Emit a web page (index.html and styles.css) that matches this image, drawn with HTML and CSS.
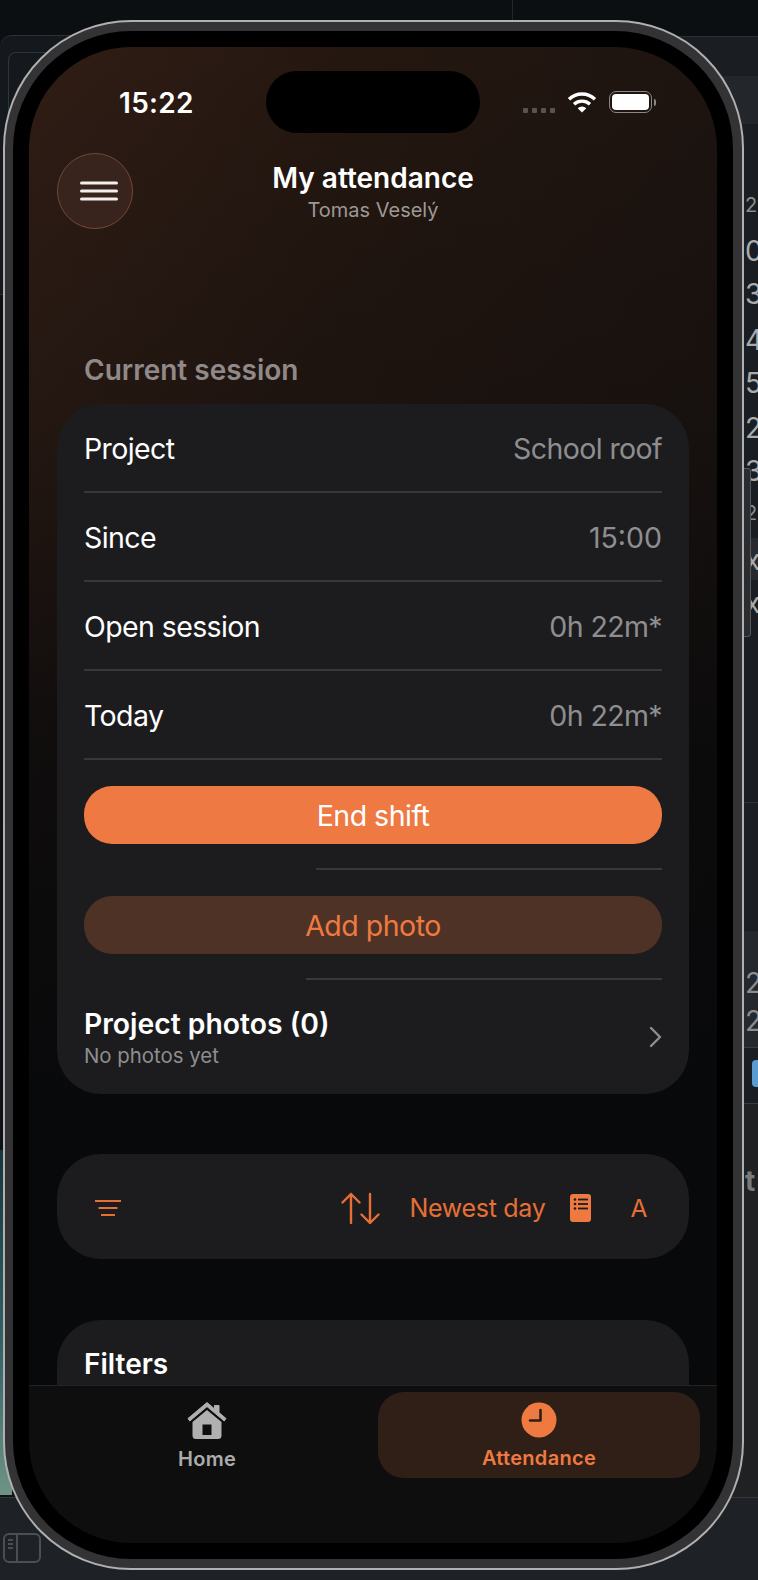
FILE: index.html
```html
<!DOCTYPE html>
<html lang="en">
<head>
<meta charset="utf-8">
<title>My attendance</title>
<link rel="stylesheet" href="styles.css">
</head>
<body>
<div class="backdrop">
  <div class="bd-vline"></div>
  <div class="bd-win-left"></div>
  <div class="bd-win-left-inner"></div>
  <div class="bd-panel-right"></div>
  <div class="bd-band bd-band-a"></div>
  <div class="bd-band bd-band-e"></div>
  <div class="bd-band bd-band-b"></div>
  <div class="bd-band bd-band-c"></div>
  <div class="bd-band bd-band-d"></div>
  <div class="bd-blue"></div>
  <div class="bd-foot"></div>
  <div class="bd-teal"></div>
  <span class="bd-ch bd-c1">0</span>
  <span class="bd-ch bd-c2">3</span>
  <span class="bd-ch bd-c3">4</span>
  <span class="bd-ch bd-c4">5</span>
  <span class="bd-ch bd-c5">2</span>
  <span class="bd-ch bd-c6">3</span>
  <span class="bd-ch bd-c10">2</span>
  <span class="bd-ch bd-c11">x</span>
  <span class="bd-ch bd-c12">x</span>
  <span class="bd-ch bd-c13">2</span>
  <span class="bd-ch bd-c7">2</span>
  <span class="bd-ch bd-c8">2</span>
  <span class="bd-ch bd-c9">t</span>
  <div class="bd-tab"></div>
  <svg class="bd-sidebar" viewBox="0 0 38 30" fill="none" stroke="#4a4f57" stroke-width="2"><rect x="1" y="1" width="36" height="28" rx="5"/><path d="M14 1v28"/><path d="M5 7h5M5 11h5M5 15h5"/></svg>
</div>

<div class="device">
  <div class="bezel">
    <main class="screen">
      <div class="island"></div>

      <div class="status">
        <span class="time">15:22</span>
        <div class="status-icons">
          <div class="signal"><i></i><i></i><i></i><i></i></div>
          <svg class="wifi" viewBox="0 0 30 22" fill="none" stroke="#fff" stroke-width="3.4" stroke-linecap="butt"><path d="M2 8.2a19 19 0 0 1 26 0"/><path d="M7 13.2a12 12 0 0 1 16 0"/><path d="M15 21.6l-4.3-4.4a6 6 0 0 1 8.6 0z" fill="#fff" stroke="none"/></svg>
          <div class="battery"><div class="battery-body"><div class="battery-fill"></div></div><div class="battery-nub"></div></div>
        </div>
      </div>

      <header class="header">
        <button class="menu-btn" aria-label="Menu">
          <svg viewBox="0 0 38 20" width="38" height="20" stroke="#f2eeec" stroke-width="3" stroke-linecap="round"><path d="M1.5 2h35M1.5 10h35M1.5 18h35"/></svg>
        </button>
        <div class="title-block">
          <div class="title">My attendance</div>
          <div class="subtitle">Tomas Veselý</div>
        </div>
      </header>

      <div class="content">
        <h2 class="section-label">Current session</h2>

        <section class="card session">
          <div class="row"><span>Project</span><span class="value">School roof</span></div>
          <div class="row"><span>Since</span><span class="value value-time">15:00</span></div>
          <div class="row"><span>Open session</span><span class="value">0h 22m*</span></div>
          <div class="row"><span>Today</span><span class="value">0h 22m*</span></div>
          <button class="btn btn-primary">End shift</button>
          <div class="rule rule-a"></div>
          <button class="btn btn-secondary">Add photo</button>
          <div class="rule rule-b"></div>
          <div class="photos">
            <div>
              <div class="photos-title">Project photos (0)</div>
              <div class="photos-sub">No photos yet</div>
            </div>
            <svg class="chevron" viewBox="0 0 13 22" fill="none" stroke="#8e8e90" stroke-width="2.4" stroke-linecap="round" stroke-linejoin="round"><path d="M2 2l9 9-9 9"/></svg>
          </div>
        </section>

        <section class="card toolbar">
          <svg class="filter-icon" viewBox="0 0 26 16" fill="none" stroke="#e76f35" stroke-width="2"><path d="M0 1h26M3.5 8h19M6 15h14"/></svg>
          <div class="spacer"></div>
          <svg class="sort-icon" viewBox="0 0 40 32" fill="none" stroke="#e76f35" stroke-width="2.4" stroke-linecap="round" stroke-linejoin="round"><path d="M10 31V2M1.5 10.5L10 2l8.5 8.5"/><path d="M29 2v29M20.500 22.500L29 31l8.500-8.500"/></svg>
          <span class="tool-text sort-text">Newest day</span>
          <svg class="book-icon" viewBox="0 0 21 28"><rect width="21" height="28" rx="3" fill="#ee7a42"/><g fill="#1c1c1e"><circle cx="5" cy="5.500" r="1.300"/><circle cx="5" cy="10" r="1.300"/><circle cx="5" cy="14.500" r="1.300"/><rect x="8" y="4.600" width="10" height="1.800"/><rect x="8" y="9.100" width="10" height="1.800"/><rect x="8" y="13.600" width="10" height="1.800"/></g></svg>
          <span class="tool-text tool-a">A</span>
        </section>

        <section class="card filters">
          <div class="filters-title">Filters</div>
        </section>
      </div>

      <nav class="tabbar">
        <div class="tab">
          <svg class="home-icon" viewBox="0 0 42 37"><path d="M21 0.500L2 16.500l1.800 2.500L21 4.600 38.200 19l1.800-2.500-7-5.900V3.500h-4.500v3.400z" fill="#b0b0b0" stroke="#b0b0b0" stroke-width="1" stroke-linejoin="round"/><path fill-rule="evenodd" d="M21 8L6.500 20v13.500a3.500 3.500 0 0 0 3.500 3.500h22a3.500 3.500 0 0 0 3.500-3.500V20zM16.500 22.500h9V33h-9z" fill="#b0b0b0"/></svg>
          <span class="tab-label">Home</span>
        </div>
        <div class="tab tab-active">
          <svg class="clock-icon" viewBox="0 0 36 36"><circle cx="18" cy="18" r="17.500" fill="#ee7a42"/><path d="M19.500 8v10.500H9" fill="none" stroke="#2e1f18" stroke-width="2.600" stroke-linecap="round" stroke-linejoin="round"/></svg>
          <span class="tab-label">Attendance</span>
        </div>
      </nav>
    </main>
  </div>
</div>
</body>
</html>
```

FILE: styles.css
```css
* { box-sizing: border-box; }

html, body {
  margin: 0;
  height: 1580px;
  overflow: hidden;
}

body {
  position: relative;
  background: linear-gradient(180deg, #0c0f12 0, #101418 100%);
  font-family: Inter, "Liberation Sans", sans-serif;
  color: #fff;
  padding: 20px 0 0 3px;
}

/* Desktop behind the device */
.backdrop {
  position: absolute;
  inset: 0;
  overflow: hidden;
}

.bd-vline { position: absolute; left: 512px; top: 0; width: 1px; height: 22px; background: #23262a; }
.bd-win-left { position: absolute; left: 0; top: 35px; width: 120px; height: 260px; border: 1px solid #2d3136; border-left: 0; background: #15181c; border-top-left-radius: 12px; }
.bd-win-left-inner { position: absolute; left: 8px; top: 52px; width: 90px; height: 60px; border: 1px solid #2a3640; border-radius: 8px 0 0 0; border-right: 0; border-bottom: 0; }
.bd-panel-right { position: absolute; left: 640px; top: 36px; right: 0; height: 1461px; background: #1a1e22; border-top: 1px solid #2a2e33; }
.bd-band { position: absolute; left: 700px; right: 0; }
.bd-band-a { top: 76px; height: 48px; background: #23272c; }
.bd-band-e { top: 538px; height: 42px; background: #26292d; }
.bd-band-b { top: 802px; height: 129px; background: #1b1f23; border-top: 1px solid #30343a; }
.bd-band-c { top: 931px; height: 117px; background: #25282c; border-bottom: 1px solid #3a3d42; }
.bd-band-d { top: 1103px; height: 394px; background: #202123; border-top: 1px solid #3a3c40; }
.bd-blue { position: absolute; left: 752px; top: 1060px; width: 10px; height: 27px; border-radius: 4px; background: #5a9bd0; }
.bd-foot { position: absolute; left: 0; right: 0; top: 1497px; bottom: 0; background: #1e2125; border-top: 1px solid #34373c; }
.bd-teal { position: absolute; left: 0; top: 1150px; width: 12px; height: 345px; background: linear-gradient(180deg, #17363f 0, #2f6166 55%, #6f9384 100%); }

.bd-ch { position: absolute; left: 745px; font-size: 28px; line-height: 30px; color: #a8abae; }
.bd-c1 { top: 236px; }
.bd-c2 { top: 279px; }
.bd-c3 { top: 325px; }
.bd-c4 { top: 368px; }
.bd-c5 { top: 413px; }
.bd-c6 { top: 456px; }
.bd-c10 { top: 190px; font-size: 20px; color: #8a8c8f; }
.bd-c13 { top: 498px; font-size: 20px; color: #8a8c8f; }
.bd-c11 { top: 545px; }
.bd-c12 { top: 588px; }
.bd-c7 { top: 968px; color: #8a8c8f; }
.bd-c8 { top: 1006px; color: #8a8c8f; }
.bd-c9 { top: 1166px; color: #77797b; font-weight: 700; }

.bd-tab { position: absolute; left: 740px; top: 468px; width: 11px; height: 169px; border: 1px solid #55585c; border-radius: 0 3px 3px 0; background: #2a2c2f; }

.bd-sidebar { position: absolute; left: 3px; top: 1533px; width: 38px; height: 30px; }

/* Device shell */
.device {
  position: relative;
  width: 741px;
  height: 1550px;
  padding: 9px 9px 9px 8px;
  background: #333335;
  border: 2px solid #b0b0b0;
  border-radius: 128px;
}

.bezel {
  height: 1528px;
  padding: 16px;
  background: #000;
  border-radius: 118px;
}

.screen {
  position: relative;
  height: 1496px;
  overflow: hidden;
  border-radius: 102px;
  background:
    linear-gradient(180deg, rgba(8, 9, 11, 0) 0, rgba(8, 9, 11, 0.25) 25%, rgba(8, 9, 11, 0.8) 48%, #08090b 72%),
    linear-gradient(100deg, #301d15 0, #241710 35%, #181210 100%);
}

.island {
  position: absolute;
  left: 237px;
  top: 24px;
  width: 214px;
  height: 62px;
  border-radius: 31px;
  background: #000;
}

/* Status bar */
.status {
  display: flex;
  align-items: center;
  justify-content: space-between;
  height: 106px;
  padding: 5px 61px 0 90px;
}

.time { font-size: 28px; font-weight: 600; line-height: 32px; letter-spacing: 0.3px; }

.status-icons { display: flex; align-items: center; margin-top: -1px; }

.signal { display: flex; gap: 4px; margin: 16px 12px 0 0; }
.signal i { width: 5px; height: 5px; border-radius: 1px; background: #5b5351; }

.wifi { width: 30px; height: 22px; margin-right: 12px; }

.battery { display: flex; align-items: center; gap: 2px; }
.battery-body { width: 43px; height: 22px; padding: 2px; border: 1.500px solid #8c8684; border-radius: 7px; }
.battery-fill { height: 100%; background: #fff; border-radius: 4px; }
.battery-nub { width: 2.500px; height: 7px; border-radius: 0 2px 2px 0; background: #8c8684; }

/* Header */
.header {
  display: grid;
  grid-template-columns: 76px 1fr 76px;
  height: 76px;
  margin: 0 28px;
}

.menu-btn {
  display: flex;
  align-items: center;
  justify-content: center;
  width: 76px;
  height: 76px;
  padding: 0 0 0 8px;
  border: 1px solid #744835;
  border-radius: 50%;
  background: #38241c;
}

.title-block { padding-top: 8px; text-align: center; }
.title { font-size: 28px; font-weight: 600; line-height: 34px; }
.subtitle { padding-top: 1px; font-size: 20px; line-height: 28px; color: #9d9896; }

/* Content */
.content { margin: 0 28px; }

.section-label {
  margin: 124px 0 17px;
  padding-left: 27px;
  font-size: 28px;
  font-weight: 600;
  line-height: 34px;
  color: #8f8a89;
}

.card {
  border-radius: 44px;
  background: #1c1c1e;
}

.session { padding: 0 27px; height: 690px; }

.row {
  display: flex;
  align-items: center;
  justify-content: space-between;
  height: 89px;
  padding-top: 2px;
  font-size: 28.500px;
  letter-spacing: -0.6px;
  border-bottom: 2px solid #38383a;
}

.value { color: #8e8e90; }
.value-time { letter-spacing: 0; }

.btn {
  display: block;
  width: 100%;
  height: 58px;
  padding: 0;
  border: 0;
  border-radius: 28px;
  font: 400 28.500px Inter, "Liberation Sans", sans-serif;
  letter-spacing: -0.5px;
}

.btn-primary { margin-top: 26px; background: #ef7943; color: #fff; }
.btn-secondary { background: #4f3226; color: #ee7a42; }

.rule { height: 2px; background: #38383a; }
.rule-a { margin: 24px 0 26px 232px; }
.rule-b { margin: 24px 0 0 222px; }

.photos {
  display: flex;
  align-items: center;
  justify-content: space-between;
  padding-top: 27px;
}

.photos-title { font-size: 28.300px; font-weight: 600; line-height: 34px; }
.photos-sub { font-size: 20.400px; line-height: 30px; color: #8e8e90; }

.chevron { width: 13px; height: 22px; margin-bottom: 4px; }

.toolbar {
  display: flex;
  align-items: center;
  height: 105px;
  margin-top: 60px;
  padding: 2px 42px 0 38px;
  color: #e76f35;
}

.filter-icon { width: 26px; height: 16px; }
.spacer { flex: 1; }
.sort-icon { width: 40px; height: 32px; margin-right: 28px; }
.tool-text { font-size: 25px; line-height: 32px; letter-spacing: -0.3px; }
.book-icon { width: 21px; height: 28px; margin: 0 39px 0 25px; }
.tool-a { font-size: 24.500px; }

.filters { height: 200px; margin-top: 61px; padding: 27px; }
.filters-title { font-size: 28px; font-weight: 600; line-height: 34px; }

/* Tab bar sits over the scrolling content */
.tabbar {
  position: absolute;
  left: 0;
  right: 0;
  bottom: 0;
  display: grid;
  grid-template-columns: 328px 322px;
  gap: 7px;
  height: 158px;
  padding: 6px 0 0 14px;
  background: #0e0e0f;
  border-top: 1px solid #232325;
}

.tab {
  display: flex;
  flex-direction: column;
  align-items: center;
  height: 86px;
  padding-top: 10px;
  color: #ababab;
}

.tab-label { margin-top: 7px; font-size: 20px; font-weight: 600; line-height: 26px; letter-spacing: 0.3px; }

.tab-active {
  border-radius: 26px;
  background: #301f17;
  color: #ee7a42;
}

.home-icon { width: 42px; height: 37px; }
.clock-icon { width: 36px; height: 36px; }
```
